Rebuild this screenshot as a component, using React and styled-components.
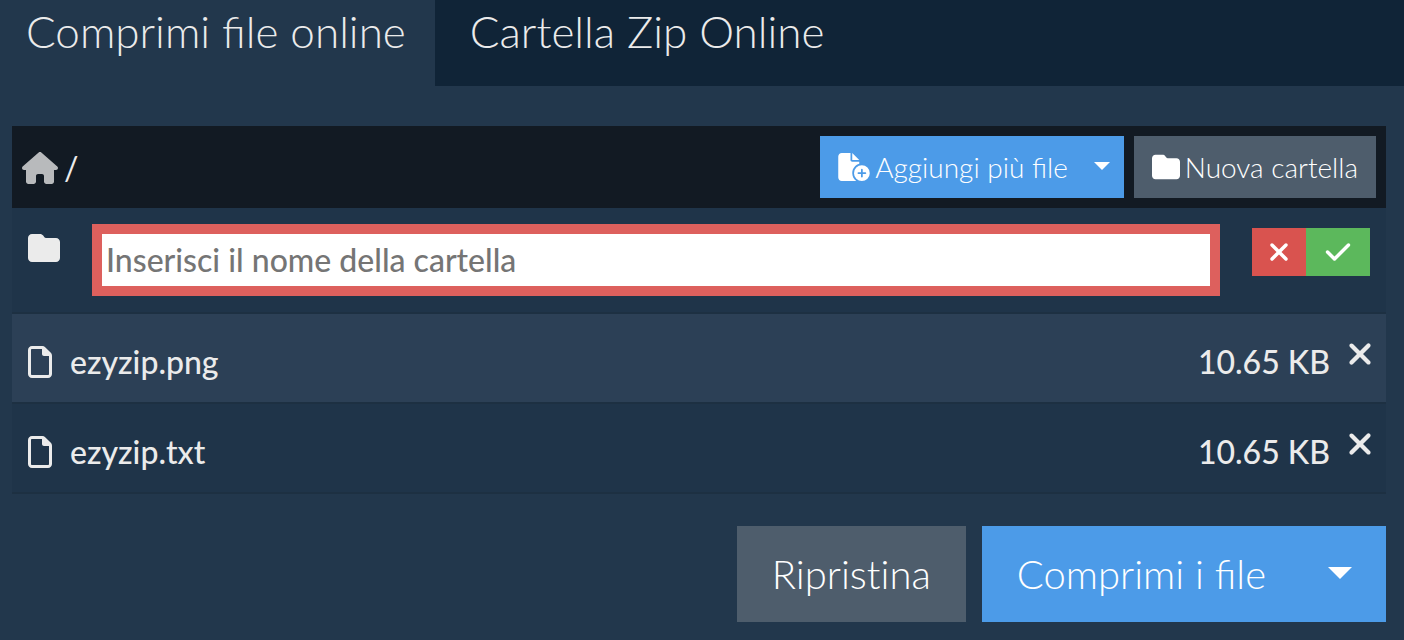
import React from "react";
import styled, { createGlobalStyle } from "styled-components";
import {
  FaHouse,
  FaFolder,
  FaFileCirclePlus,
  FaRegFile,
  FaXmark,
  FaCheck,
} from "react-icons/fa6";

const GlobalStyle = createGlobalStyle`
  *, *::before, *::after { box-sizing: border-box; }
  body {
    margin: 0;
    background: #22374c;
    color: #ebebeb;
    font-family: Lato, "Liberation Sans", sans-serif;
    font-size: 32px;
    line-height: 48px;
  }
  button, input { font: inherit; color: inherit; border: 0; border-radius: 0; margin: 0; }
  button { cursor: pointer; }
  svg { display: block; flex: none; }
`;

const Tabs = styled.nav`
  display: flex;
  background: #102437;
`;

const Tab = styled.a`
  padding: ${(p) => (p.$active ? "0 29px 24px 26px" : "0 35px 24px")};
  background: ${(p) => (p.$active ? "#22374c" : "transparent")};
  color: #ebebeb;
  font-size: 44px;
  font-weight: 300;
  line-height: 62px;
  text-decoration: none;
  white-space: nowrap;
`;

const Panel = styled.main`
  padding: 40px 18px 18px 12px;
`;

const Toolbar = styled.header`
  display: flex;
  align-items: center;
  justify-content: space-between;
  padding: 10px;
  background: #121a23;
`;

const Breadcrumb = styled.nav`
  display: flex;
  align-items: center;
  gap: 6px;
  padding-top: 2px;
`;

const HomeLink = styled.a`
  color: #b8babc;
`;

const HomeIcon = styled(FaHouse)`
  width: 36px;
  height: 32px;
`;

const AddFileIcon = styled(FaFileCirclePlus)`
  width: 32px;
  height: 28px;
`;

const FileIcon = styled(FaRegFile)`
  width: 24px;
  height: 32px;
`;

const ButtonGroup = styled.div`
  display: flex;
  justify-content: flex-end;
  gap: ${(p) => (p.$large ? 16 : 10)}px;
`;

const Split = styled.div`
  display: flex;
`;

const Button = styled.button`
  display: flex;
  align-items: center;
  gap: 5px;
  height: ${(p) => (p.$large ? 96 : 62)}px;
  padding: 0 ${(p) => (p.$large ? 35 : 18)}px;
  background: ${(p) => (p.$primary ? "#4c9be8" : "#4e5d6c")};
  color: #fff;
  font-size: ${(p) => (p.$large ? 40 : 28)}px;
  font-weight: 300;
  font-variant-ligatures: ${(p) => (p.$primary ? "normal" : "none")};
  white-space: nowrap;
`;

const CaretButton = styled(Button)`
  padding: ${(p) => (p.$large ? "0 34px 0 27px" : "0 14px 0 8px")};
`;

const Caret = styled.span`
  border: ${(p) => (p.$large ? 12 : 8)}px solid transparent;
  border-top-color: #fff;
  border-bottom: 0;
  margin-bottom: 2px;
`;

const FileTable = styled.table`
  width: 100%;
  border-collapse: collapse;
`;

const Row = styled.tr`
  background: ${(p) => (p.$alt ? "#2c4056" : "#1f3449")};
  border-bottom: 2px solid #1d3042;
`;

const Cell = styled.td`
  height: 90px;
  padding: ${(p) => p.$pad};
  font-weight: 500;
  text-align: ${(p) => (p.$end ? "right" : "left")};
  vertical-align: top;
  white-space: nowrap;
  width: ${(p) => (p.$end ? "1px" : "auto")};
`;

const FileName = styled.span`
  display: flex;
  align-items: center;
  gap: 18px;
`;

const NewFolderForm = styled.form`
  display: flex;
  align-items: flex-start;
  gap: 32px;
  font-weight: 500;
`;

const FolderMark = styled.span`
  padding-top: 8px;
`;

const NameInput = styled.input`
  flex: 1;
  min-width: 0;
  height: 72px;
  padding: 0 4px 2px;
  border: 10px solid #dd605d;
  background: #fff;
  color: #333;
  outline: 0;
  &::placeholder { color: #757575; opacity: 1; }
`;

const FormActions = styled.div`
  display: flex;
  padding-top: 4px;
`;

const IconButton = styled.button`
  display: flex;
  justify-content: center;
  align-items: center;
  width: ${(p) => p.$width}px;
  height: 48px;
  padding: 0;
  background: ${(p) => p.$color || "transparent"};
  color: ${(p) => (p.$color ? "#fff" : "#ebebeb")};
`;

const Footer = styled.footer`
  padding-top: 32px;
`;

const files = [
  { name: "ezyzip.png", size: "10.65 KB" },
  { name: "ezyzip.txt", size: "10.65 KB" },
];

export default function App() {
  return (
    <>
      <GlobalStyle />
      <Tabs>
        <Tab href="#files" $active aria-current="page">Comprimi file online</Tab>
        <Tab href="#folder">Cartella Zip Online</Tab>
      </Tabs>
      <Panel>
        <Toolbar>
          <Breadcrumb aria-label="Percorso">
            <HomeLink href="#home" aria-label="Home">
              <HomeIcon />
            </HomeLink>
            <span>/</span>
          </Breadcrumb>
          <ButtonGroup>
            <Split>
              <Button type="button" $primary>
                <AddFileIcon />
                Aggiungi più file
              </Button>
              <CaretButton type="button" $primary aria-label="Altre opzioni">
                <Caret />
              </CaretButton>
            </Split>
            <Button type="button">
              <FaFolder size={28} />
              Nuova cartella
            </Button>
          </ButtonGroup>
        </Toolbar>
        <FileTable aria-label="File">
          <tbody>
            <Row>
              <Cell colSpan={3} $pad="16px">
                <NewFolderForm onSubmit={(e) => e.preventDefault()}>
                  <FolderMark><FaFolder size={32} /></FolderMark>
                  <NameInput
                    type="text"
                    aria-label="Nome della cartella"
                    placeholder="Inserisci il nome della cartella"
                  />
                  <FormActions>
                    <IconButton type="button" $width={54} $color="#d9534f" aria-label="Annulla">
                      <FaXmark size={28} />
                    </IconButton>
                    <IconButton type="submit" $width={64} $color="#5cb85c" aria-label="Conferma">
                      <FaCheck size={28} />
                    </IconButton>
                  </FormActions>
                </NewFolderForm>
              </Cell>
            </Row>
            {files.map((file, i) => (
              <Row key={file.name} $alt={i % 2 === 0}>
                <Cell $pad="24px 16px 0">
                  <FileName>
                    <FileIcon />
                    {file.name}
                  </FileName>
                </Cell>
                <Cell $end $pad="24px 0 0">{file.size}</Cell>
                <Cell $end $pad="16px 8px 0 12px">
                  <IconButton type="button" $width={36} aria-label={"Rimuovi " + file.name}>
                    <FaXmark size={34} />
                  </IconButton>
                </Cell>
              </Row>
            ))}
          </tbody>
        </FileTable>
        <Footer>
          <ButtonGroup $large>
            <Button type="button" $large>Ripristina</Button>
            <Split>
              <Button type="button" $large $primary>Comprimi i file</Button>
              <CaretButton type="button" $large $primary aria-label="Altre opzioni di compressione">
                <Caret $large />
              </CaretButton>
            </Split>
          </ButtonGroup>
        </Footer>
      </Panel>
    </>
  );
}
